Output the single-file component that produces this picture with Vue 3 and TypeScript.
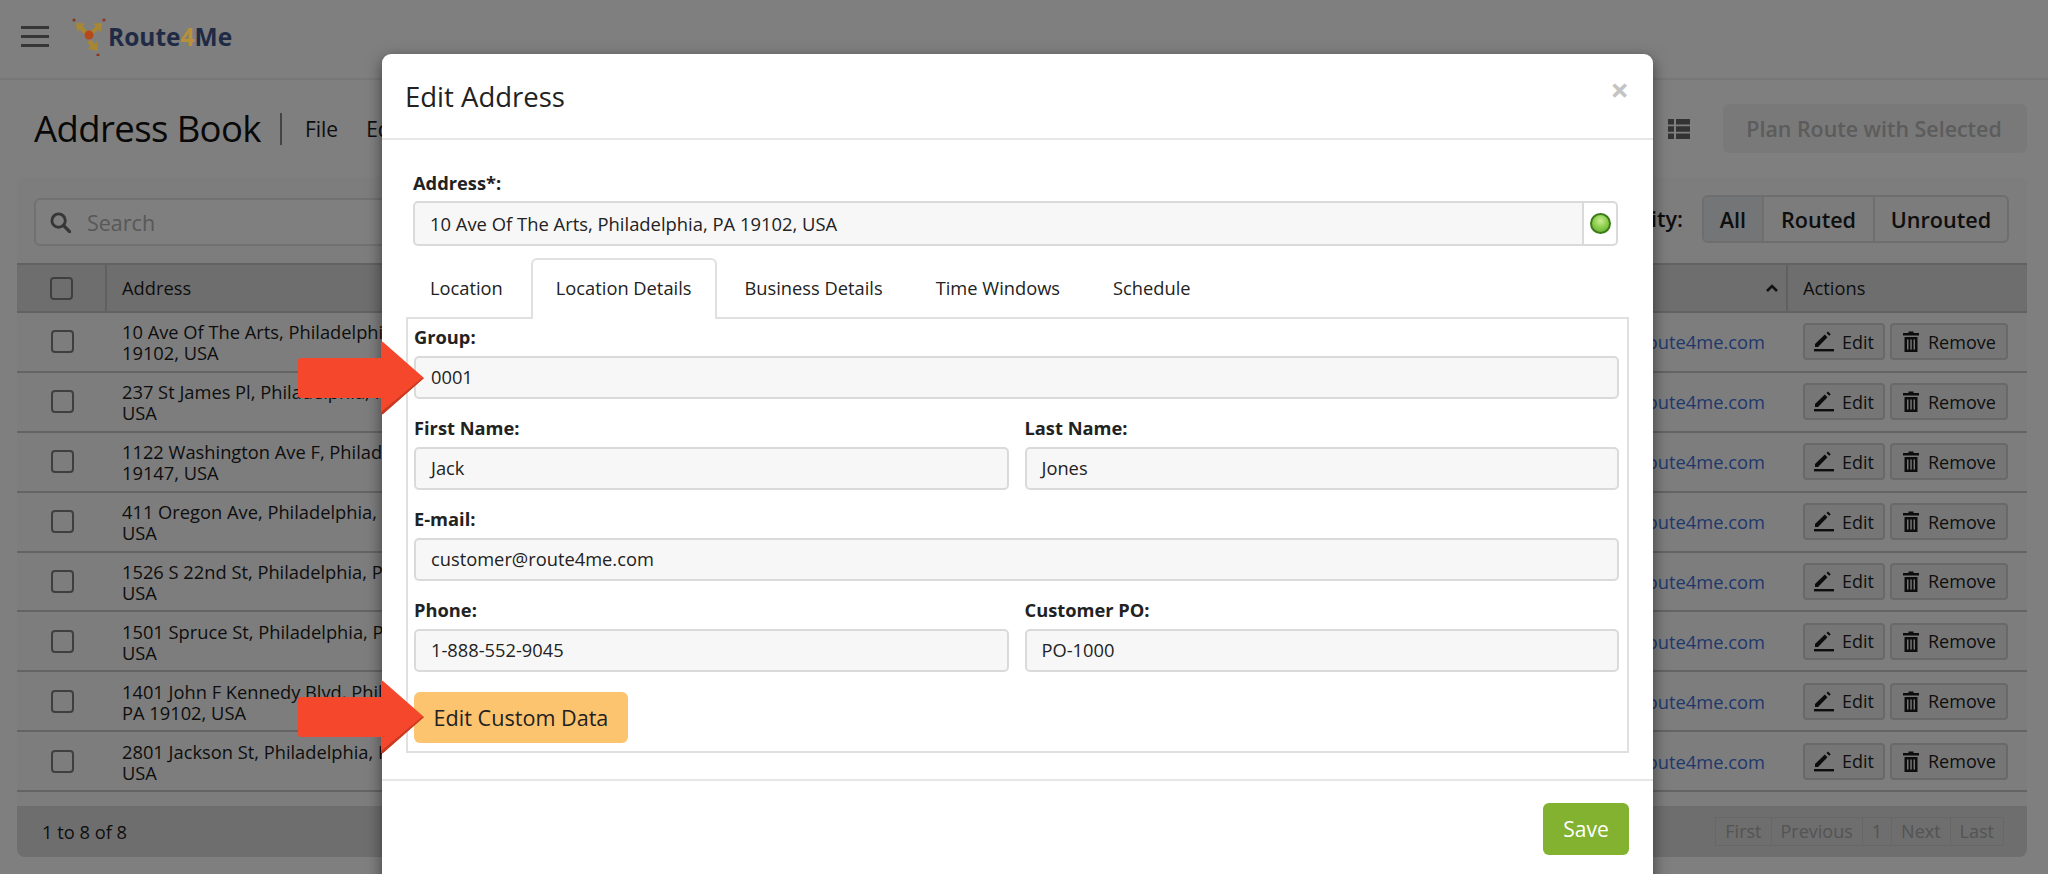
<script setup lang="ts">
interface Row { a: string; b: string }
const rows: Row[] = [
  { a: '10 Ave Of The Arts, Philadelphia, PA', b: '19102, USA' },
  { a: '237 St James Pl, Philadelphia, PA 19106,', b: 'USA' },
  { a: '1122 Washington Ave F, Philadelphia, PA', b: '19147, USA' },
  { a: '411 Oregon Ave, Philadelphia, PA 19148,', b: 'USA' },
  { a: '1526 S 22nd St, Philadelphia, PA 19146,', b: 'USA' },
  { a: '1501 Spruce St, Philadelphia, PA 19102,', b: 'USA' },
  { a: '1401 John F Kennedy Blvd, Philadelphia,', b: 'PA 19102, USA' },
  { a: '2801 Jackson St, Philadelphia, PA 19145,', b: 'USA' },
]
const tabs = ['Location', 'Location Details', 'Business Details', 'Time Windows', 'Schedule']
const pages = ['First', 'Previous', '1', 'Next', 'Last']
</script>

<template>
  <div class="page">
    <header class="topbar">
      <div class="burger"><span></span><span></span><span></span></div>
      <div class="logo">
        <svg class="logo-icon" viewBox="0 0 38 38" aria-hidden="true">
          <circle cx="3" cy="2" r="1.600" fill="#8c3322" />
          <circle cx="33" cy="2" r="1.600" fill="#8c3322" />
          <circle cx="27" cy="37" r="1.600" fill="#8c3322" />
          <path d="M5 5l9 .5-2.500 2.500 5 5-3 3.500-5-5-2.500 2.500z" fill="#a88734" />
          <path d="M31 5l-1 9-2.500-2.500-5.500 5-2.500-3 5.500-5.500-3-2.500z" fill="#a88734" />
          <path d="M27 33l-10-2 2.500-2.500-3.500-4.500 4-2.500 3.500 4.500 2.500-2.500z" fill="#a88734" />
          <circle cx="18" cy="17" r="4.500" fill="#b5491c" />
        </svg>
        <div class="logo-text">Route<span class="logo-four">4</span>Me</div>
      </div>
    </header>

    <div class="titlebar">
      <h1 class="title">Address Book</h1>
      <div class="title-sep"></div>
      <nav class="menu"><span>File</span><span>Edit</span></nav>
      <svg class="list-icon" viewBox="0 0 22 20" aria-hidden="true">
        <path d="M0 0h6v5.500H0zM8 0h14v5.500H8zM0 7.200h6v5.600H0zM8 7.200h14v5.600H8zM0 14.500h6V20H0zM8 14.500h14V20H8z" fill="#666" />
      </svg>
      <button class="plan">Plan Route with Selected</button>
    </div>

    <section class="card">
      <div class="toolbar">
        <div class="search">
          <svg class="search-icon" viewBox="0 0 22 22" aria-hidden="true">
            <circle cx="9" cy="9" r="7" fill="none" stroke="#6c6c6c" stroke-width="3" />
            <path d="M14 14l6.500 6.500" stroke="#6c6c6c" stroke-width="3.500" stroke-linecap="round" />
          </svg>
          <span>Search</span>
        </div>
        <div class="filter-wrap">
          <span class="filter-label">Activity:</span>
          <div class="filter">
            <span class="on">All</span><span>Routed</span><span>Unrouted</span>
          </div>
        </div>
      </div>

      <div class="thead">
        <div class="cell-check head-check"><span class="box"></span></div>
        <div class="cell-address head-address">Address</div>
        <div class="cell-email head-email">
          <svg class="caret" viewBox="0 0 12 8" aria-hidden="true"><path d="M1 7l5-5 5 5" fill="none" stroke="#222" stroke-width="2.600" /></svg>
        </div>
        <div class="cell-actions head-actions">Actions</div>
      </div>

      <div v-for="r in rows" :key="r.a" class="trow">
        <div class="cell-check"><span class="box"></span></div>
        <div class="cell-address"><div>{{ r.a }}</div><div>{{ r.b }}</div></div>
        <div class="cell-email"><a class="mail">customer@route4me.com</a></div>
        <div class="cell-actions">
          <button class="act act-edit">
            <svg class="i-edit" viewBox="0 0 20 21" aria-hidden="true">
              <path d="M1 13L10.800 3.500l2.700 2.700L4 16H1z" fill="#1a1a1a" />
              <path d="M12.500 2l1.500-1.500 2.700 2.700-1.500 1.500z" fill="#1a1a1a" />
              <rect x="0" y="18" width="20" height="2.400" fill="#1a1a1a" />
            </svg>
            Edit
          </button>
          <button class="act act-remove">
            <svg class="i-trash" viewBox="0 0 16 21" aria-hidden="true">
              <path d="M5.500 2V.5h5V2H16v2.600H0V2z" fill="#1a1a1a" />
              <path d="M1.500 6h13v15h-13zM4 8.500v10h1.500v-10zM7.300 8.500v10h1.500v-10zM10.500 8.500v10H12v-10z" fill="#1a1a1a" fill-rule="evenodd" />
            </svg>
            Remove
          </button>
        </div>
      </div>

      <div class="tfoot">
        <span>1 to 8 of 8</span>
        <div class="pager"><span v-for="p in pages" :key="p">{{ p }}</span></div>
      </div>
    </section>

    <div class="backdrop"></div>

    <div class="modal">
      <div class="modal-head">
        <h2>Edit Address</h2>
        <span class="close">×</span>
      </div>
      <div class="modal-body">
        <label class="lbl addr-lbl">Address*:</label>
        <div class="addr-group">
          <div class="input addr-input">10 Ave Of The Arts, Philadelphia, PA 19102, USA</div>
          <div class="addon"><span class="led"></span></div>
        </div>
        <div class="tabs">
          <span v-for="(t, i) in tabs" :key="t" class="tab" :class="{ active: i === 1 }">{{ t }}</span>
        </div>
        <div class="pane">
          <div class="form-grid">
            <div class="field wide"><label class="lbl">Group:</label><div class="input">0001</div></div>
            <div class="field"><label class="lbl">First Name:</label><div class="input">Jack</div></div>
            <div class="field"><label class="lbl">Last Name:</label><div class="input">Jones</div></div>
            <div class="field wide"><label class="lbl">E-mail:</label><div class="input">customer@route4me.com</div></div>
            <div class="field"><label class="lbl">Phone:</label><div class="input">1-888-552-9045</div></div>
            <div class="field"><label class="lbl">Customer PO:</label><div class="input">PO-1000</div></div>
          </div>
          <button class="custom">Edit Custom Data</button>
        </div>
      </div>
      <div class="modal-foot"><button class="save">Save</button></div>
    </div>

    <svg class="arrow arrow-group" viewBox="0 0 126 74" aria-hidden="true">
      <path d="M3 17h80V2q0-2 2-1l41 36-41 36q-2 1-2-1V57H3q-3 0-3-3V20q0-3 3-3z" fill="#f4472c" />
      <path d="M83 57v15q0 2 2 1l41-36-2 0-41 34z" fill="#c73a22" />
    </svg>
    <svg class="arrow arrow-custom" viewBox="0 0 126 74" aria-hidden="true">
      <path d="M3 17h80V2q0-2 2-1l41 36-41 36q-2 1-2-1V57H3q-3 0-3-3V20q0-3 3-3z" fill="#f4472c" />
      <path d="M83 57v15q0 2 2 1l41-36-2 0-41 34z" fill="#c73a22" />
    </svg>
  </div>
</template>

<style>
html, body { margin: 0; padding: 0; background: #808080; }
</style>

<style scoped>
* { box-sizing: border-box; }
.page {
  position: relative;
  width: 2048px;
  height: 874px;
  overflow: hidden;
  background: #fff;
  color: #1c1c1c;
  font-family: "Open Sans", "Liberation Sans", sans-serif;
  font-size: 18.300px;
}
button { font-family: inherit; border: none; padding: 0; }

.topbar {
  height: 80px;
  display: flex;
  align-items: center;
  padding-left: 21px;
  border-bottom: 2px solid #f0f0f0;
  padding-bottom: 6px;
}
.burger { width: 28px; display: flex; flex-direction: column; gap: 6px; }
.burger span { height: 3px; background: #6c6c6c; }
.logo { display: flex; align-items: center; position: relative; z-index: 1; margin-left: 22px; }
.logo-icon { width: 38px; height: 38px; margin-top: 2px; }
.logo-text { font-size: 24.500px; font-weight: 700; color: #1f2a45; letter-spacing: 0; margin-left: -1px; }
.logo-four { color: #b8903a; }

.titlebar {
  height: 97px;
  display: flex;
  align-items: center;
  padding: 0 21px 0 34px;
}
.title { margin: 0 0 1px; font-size: 36.500px; font-weight: 400; color: #111; letter-spacing: -0.6px; }
.title-sep { width: 2px; height: 32px; background: #888; margin-left: 19px; }
.menu { display: flex; gap: 28px; margin-left: 23px; font-size: 21px; }
.list-icon { width: 22px; height: 20px; margin-left: auto; margin-right: 33px; }
.plan {
  width: 304px;
  height: 49px;
  padding-right: 2px;
  background: #f2f2f2;
  color: #b8b8b8;
  font-size: 21.400px;
  font-weight: 600;
  border-radius: 6px;
}

.card {
  margin: 0 21px 0 17px;
  height: 680px;
  background: #fafafa;
  border-radius: 8px;
}
.toolbar {
  height: 86px;
  display: flex;
  justify-content: space-between;
  padding: 18px 18px 0 17px;
}
.search {
  width: 1000px;
  height: 48px;
  margin-top: 3px;
  display: flex;
  align-items: center;
  gap: 16px;
  padding-left: 14px;
  background: #fff;
  border: 2px solid #e2e2e2;
  border-radius: 6px;
  color: #b0b0b0;
  font-size: 21.500px;
}
.search-icon { width: 21px; height: 21px; }
.filter-wrap { display: flex; align-items: flex-start; gap: 19px; }
.filter-label { font-size: 21.600px; font-weight: 600; line-height: 48px; }
.filter {
  display: flex;
  height: 48px;
  border: 2px solid #dcdcdc;
  border-radius: 6px;
  overflow: hidden;
  font-size: 21.600px;
  font-weight: 550;
  background: #f8f8f8;
}
.filter span {
  display: flex;
  align-items: center;
  justify-content: center;
  width: 111px;
  border-left: 2px solid #dcdcdc;
}
.filter span:first-child { width: 58px; border-left: none; background: #e6ebee; }
.filter span:last-child { width: 134px; }

.thead, .trow {
  display: grid;
  grid-template-columns: 90px 1fr auto 241px;
}
.thead {
  height: 50px;
  background: #dcdcdc;
  border-top: 2px solid #c4c4c4;
  border-bottom: 2px solid #c4c4c4;
  align-items: center;
}
.trow {
  height: 59.875px;
  border-bottom: 2px solid #c9c9c9;
  align-items: center;
}
.cell-check { display: flex; justify-content: center; align-items: center; height: 100%; }
.head-check { border-right: 2px solid #c0c0c0; }
.box {
  width: 23px;
  height: 23px;
  border: 2px solid #7f7f7f;
  border-radius: 4px;
}
.cell-address { padding: 1px 0 0 15px; line-height: 21px; }
.head-address { padding-top: 0; margin-top: -1px; }
.cell-email { display: flex; justify-content: flex-end; align-items: center; padding-right: 21px; height: 100%; }
.head-email { padding-right: 8px; }
.caret { width: 12px; height: 8px; }
.mail { color: #3f70d8; }
.head-actions { display: flex; align-items: center; height: 100%; padding: 0 0 2px 15px; border-left: 2px solid #c0c0c0; }
.cell-actions:not(.head-actions) { display: flex; gap: 5px; padding-left: 17px; }
.act {
  height: 37px;
  display: flex;
  align-items: center;
  background: #ededed;
  border: 2px solid #d2d2d2;
  border-radius: 4px;
  font-size: 18px;
  color: #1c1c1c;
}
.act-edit { width: 82px; padding-left: 9px; gap: 8px; }
.act-remove { width: 118px; padding-left: 11px; gap: 9px; }
.i-edit { width: 20px; height: 21px; }
.i-trash { width: 16px; height: 21px; }

.tfoot {
  margin-top: 14px;
  height: 51px;
  display: flex;
  justify-content: space-between;
  align-items: center;
  padding: 0 23px 0 25px;
  background: #dcdcdc;
  border-radius: 0 0 8px 8px;
}
.pager { display: flex; height: 29px; border: 1px solid #cfcfcf; color: #a8a8a8; font-size: 18px; }
.pager span { padding: 0 9px; line-height: 27px; border-left: 1px solid #cfcfcf; }
.pager span:first-child { border-left: none; }

.backdrop {
  position: absolute;
  inset: 0;
  background: rgba(0, 0, 0, 0.5);
}

.modal {
  position: absolute;
  left: 382px;
  top: 54px;
  width: 1271px;
  height: 900px;
  background: #fff;
  border-radius: 9px;
  box-shadow: 0 5px 15px rgba(0, 0, 0, 0.5);
}
.modal-head {
  height: 86px;
  display: flex;
  align-items: flex-start;
  justify-content: space-between;
  padding: 0 24px 0 23px;
  border-bottom: 2px solid #e7e7e7;
}
.modal-head h2 { margin: 25px 0 0; font-size: 27.500px; line-height: 36px; font-weight: 400; color: #222; }
.close { margin-top: 15px; font-size: 33px; line-height: 42px; font-weight: 700; color: #c4c4c4; }
.modal-body { padding: 0 24px; }
.lbl { display: block; height: 20px; line-height: 20px; font-weight: 700; color: #222; }
.addr-lbl { margin: 33px 0 8px 7px; }
.addr-group { display: flex; height: 45px; margin: 0 11px 0 7px; }
.input {
  height: 43px;
  padding-left: 15px;
  line-height: 38px;
  background: #f7f7f7;
  border: 2px solid #dadada;
  border-radius: 5px;
  color: #222;
}
.addr-input {
  flex: 1;
  height: 45px;
  font-size: 18.400px;
  line-height: 41px;
  border-radius: 5px 0 0 5px;
}
.addon {
  width: 34px;
  display: flex;
  align-items: center;
  justify-content: center;
  border: 2px solid #dadada;
  border-left: none;
  border-radius: 0 5px 5px 0;
}
.led {
  width: 21px;
  height: 21px;
  border-radius: 50%;
  border: 2px solid #3d7a1a;
  background: radial-gradient(circle at 50% 35%, #cdeb96 0%, #8fd14f 45%, #5fa82c 100%);
}
.tabs { display: flex; gap: 3px; margin-top: 12px; height: 59px; margin-left: -1px; position: relative; }
.tab {
  padding: 0 23px;
  line-height: 55px;
  color: #222;
  border: 2px solid transparent;
  border-bottom: none;
}
.tab.active {
  background: #fff;
  border-color: #e0e0e0;
  border-radius: 6px 6px 0 0;
  height: 61px;
  z-index: 1;
}
.pane {
  height: 436px;
  padding: 8px 8px 0 6px;
  border: 2px solid #e0e0e0;
}
.form-grid { display: grid; grid-template-columns: 1fr 1fr; column-gap: 16px; row-gap: 19px; }
.field { display: flex; flex-direction: column; gap: 9px; }
.wide { grid-column: 1 / -1; }
.custom {
  display: block;
  width: 214px;
  height: 51px;
  margin-top: 20px;
  background: #fdc46f;
  border-radius: 6px;
  color: #222;
  font-size: 21.600px;
}
.modal-foot {
  margin-top: 26px;
  padding: 22px 24px 0 0;
  border-top: 2px solid #e7e7e7;
  display: flex;
  justify-content: flex-end;
}
.save {
  width: 86px;
  height: 52px;
  background: #82b22f;
  border-radius: 6px;
  color: #fff;
  font-size: 21px;
}

.arrow { position: absolute; left: 298px; width: 126px; height: 74px; }
.arrow-group { top: 341px; }
.arrow-custom { top: 680px; }
</style>
